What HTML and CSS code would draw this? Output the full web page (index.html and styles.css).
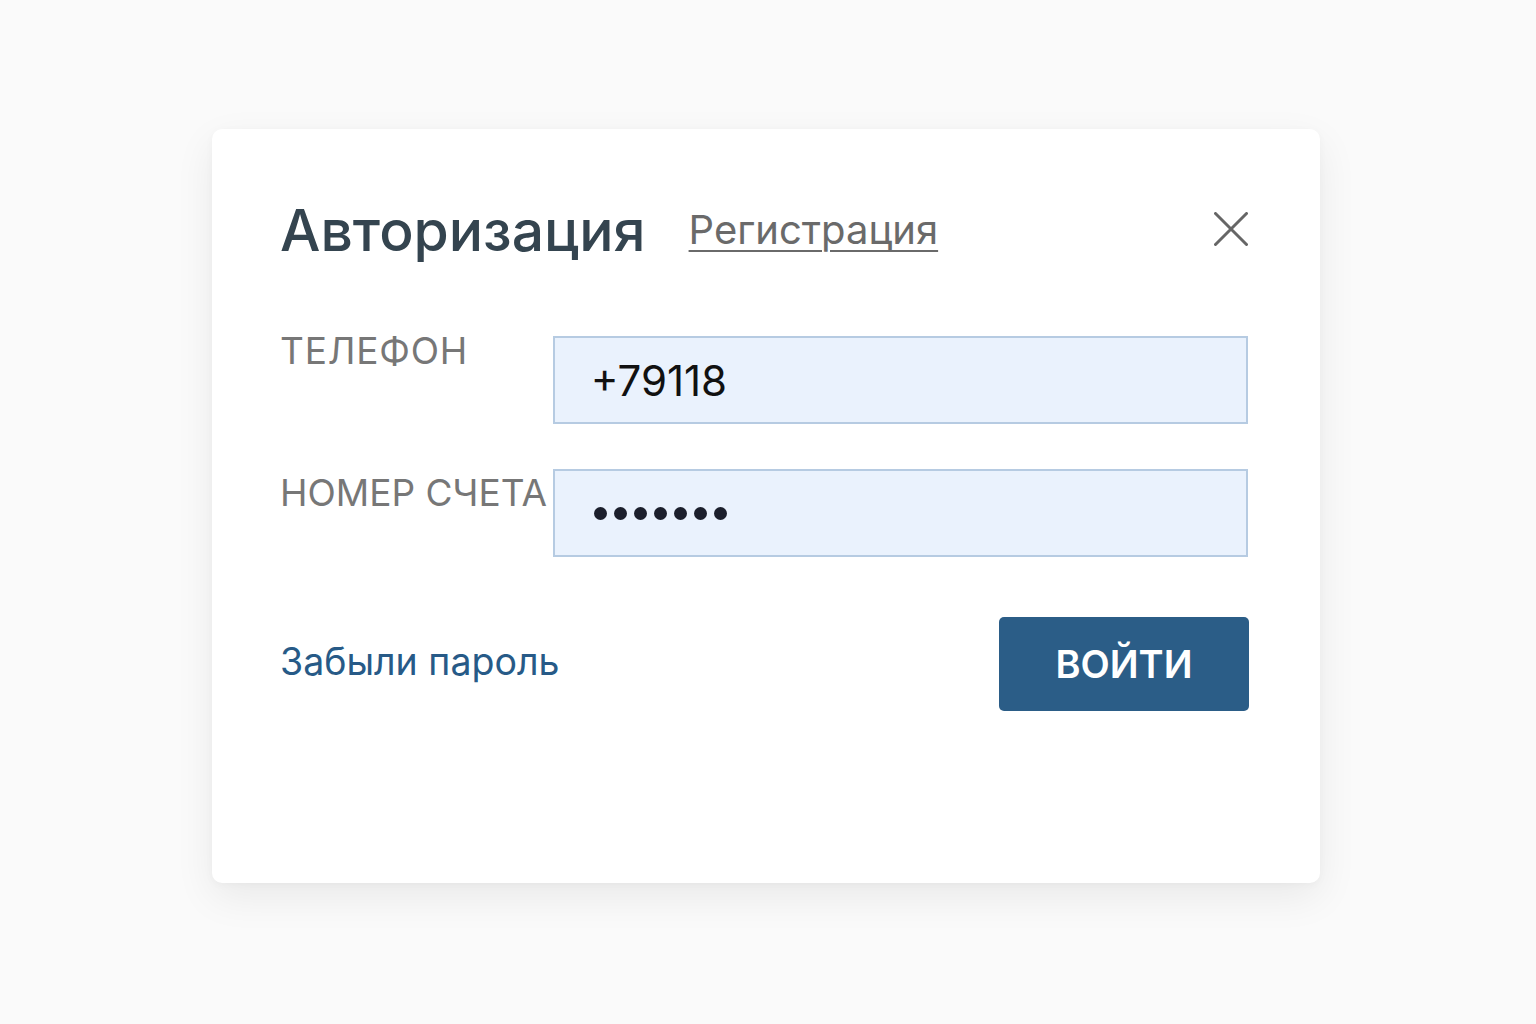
FILE: index.html
```html
<!DOCTYPE html>
<html lang="ru">
<head>
<meta charset="utf-8">
<title>Авторизация</title>
<link rel="stylesheet" href="styles.css">
</head>
<body>
<div class="card">
  <div class="header">
    <h1 class="title">Авторизация</h1>
    <a class="register" href="#">Регистрация</a>
    <button class="close" aria-label="Закрыть">
      <svg width="34" height="34" viewBox="0 0 34 34"><path d="M1.5 1.5L32.5 32.5M32.5 1.5L1.5 32.5" stroke="#666" stroke-width="3" stroke-linecap="round"/></svg>
    </button>
  </div>
  <div class="form">
    <div class="row">
      <label class="label label-wide">ТЕЛЕФОН</label>
      <div class="input">+79118</div>
    </div>
    <div class="row">
      <label class="label label-low">НОМЕР СЧЕТА</label>
      <div class="input">
        <span class="dots"><i></i><i></i><i></i><i></i><i></i><i></i><i></i></span>
      </div>
    </div>
  </div>
  <div class="actions">
    <a class="forgot" href="#">Забыли пароль</a>
    <button class="submit">ВОЙТИ</button>
  </div>
</div>
</body>
</html>
```

FILE: styles.css
```css
* { box-sizing: border-box; }
html, body { margin: 0; padding: 0; }
body {
  width: 1536px;
  height: 1024px;
  background: #fafafa;
  font-family: "Inter", "Roboto", "Noto Sans", sans-serif;
  padding: 129px 0 0 212px;
}
.card {
  width: 1108px;
  height: 754px;
  background: #fff;
  border-radius: 10px;
  box-shadow: 0 14px 40px rgba(0,0,0,0.07), 0 2px 8px rgba(0,0,0,0.03);
  padding: 70px 72px 0 68px;
}
.header {
  display: flex;
  align-items: flex-start;
  height: 64px;
}
.title {
  margin: 0;
  font-size: 57px;
  line-height: 64px;
  font-weight: 500;
  color: #34444f;
}
.register {
  margin-left: 43px;
  margin-top: 7px;
  font-size: 40px;
  line-height: 48px;
  color: #6a6a6a;
  text-decoration: underline;
  text-decoration-thickness: 2px;
  text-underline-offset: 6px;
}
.close {
  margin-left: auto;
  margin-top: 13px;
  border: 0;
  background: none;
  padding: 0;
  width: 34px;
  height: 34px;
  display: block;
}
.close svg { display: block; }
.form {
  margin-top: 73px;
  display: flex;
  flex-direction: column;
  gap: 45px;
}
.row {
  display: flex;
  align-items: flex-start;
}
.label {
  width: 273px;
  font-size: 37px;
  line-height: 30px;
  color: #777;
  white-space: nowrap;
}
.label-wide { letter-spacing: 0.8px; }
.label-low { padding-top: 9px; }
.input {
  width: 696px;
  height: 88px;
  border: 2px solid #b6cbe2;
  background: #eaf2fd;
  display: flex;
  align-items: center;
  padding-left: 36px;
  font-size: 42px;
  color: #111;
}
.dots { display: flex; gap: 7px; padding-left: 3px; }
.dots i {
  display: block;
  width: 13px;
  height: 13px;
  border-radius: 50%;
  background: #1b1f2c;
}
.actions {
  margin-top: 60px;
  display: flex;
  align-items: center;
  justify-content: space-between;
  width: 969px;
}
.forgot {
  font-size: 37.5px;
  color: #275a87;
  text-decoration: none;
  margin-bottom: 6px;
}
.submit {
  width: 250px;
  height: 94px;
  border: 0;
  border-radius: 5px;
  background: #2b5d87;
  color: #fff;
  font-family: inherit;
  font-size: 38px;
  font-weight: 600;
  padding: 0;
}
```
